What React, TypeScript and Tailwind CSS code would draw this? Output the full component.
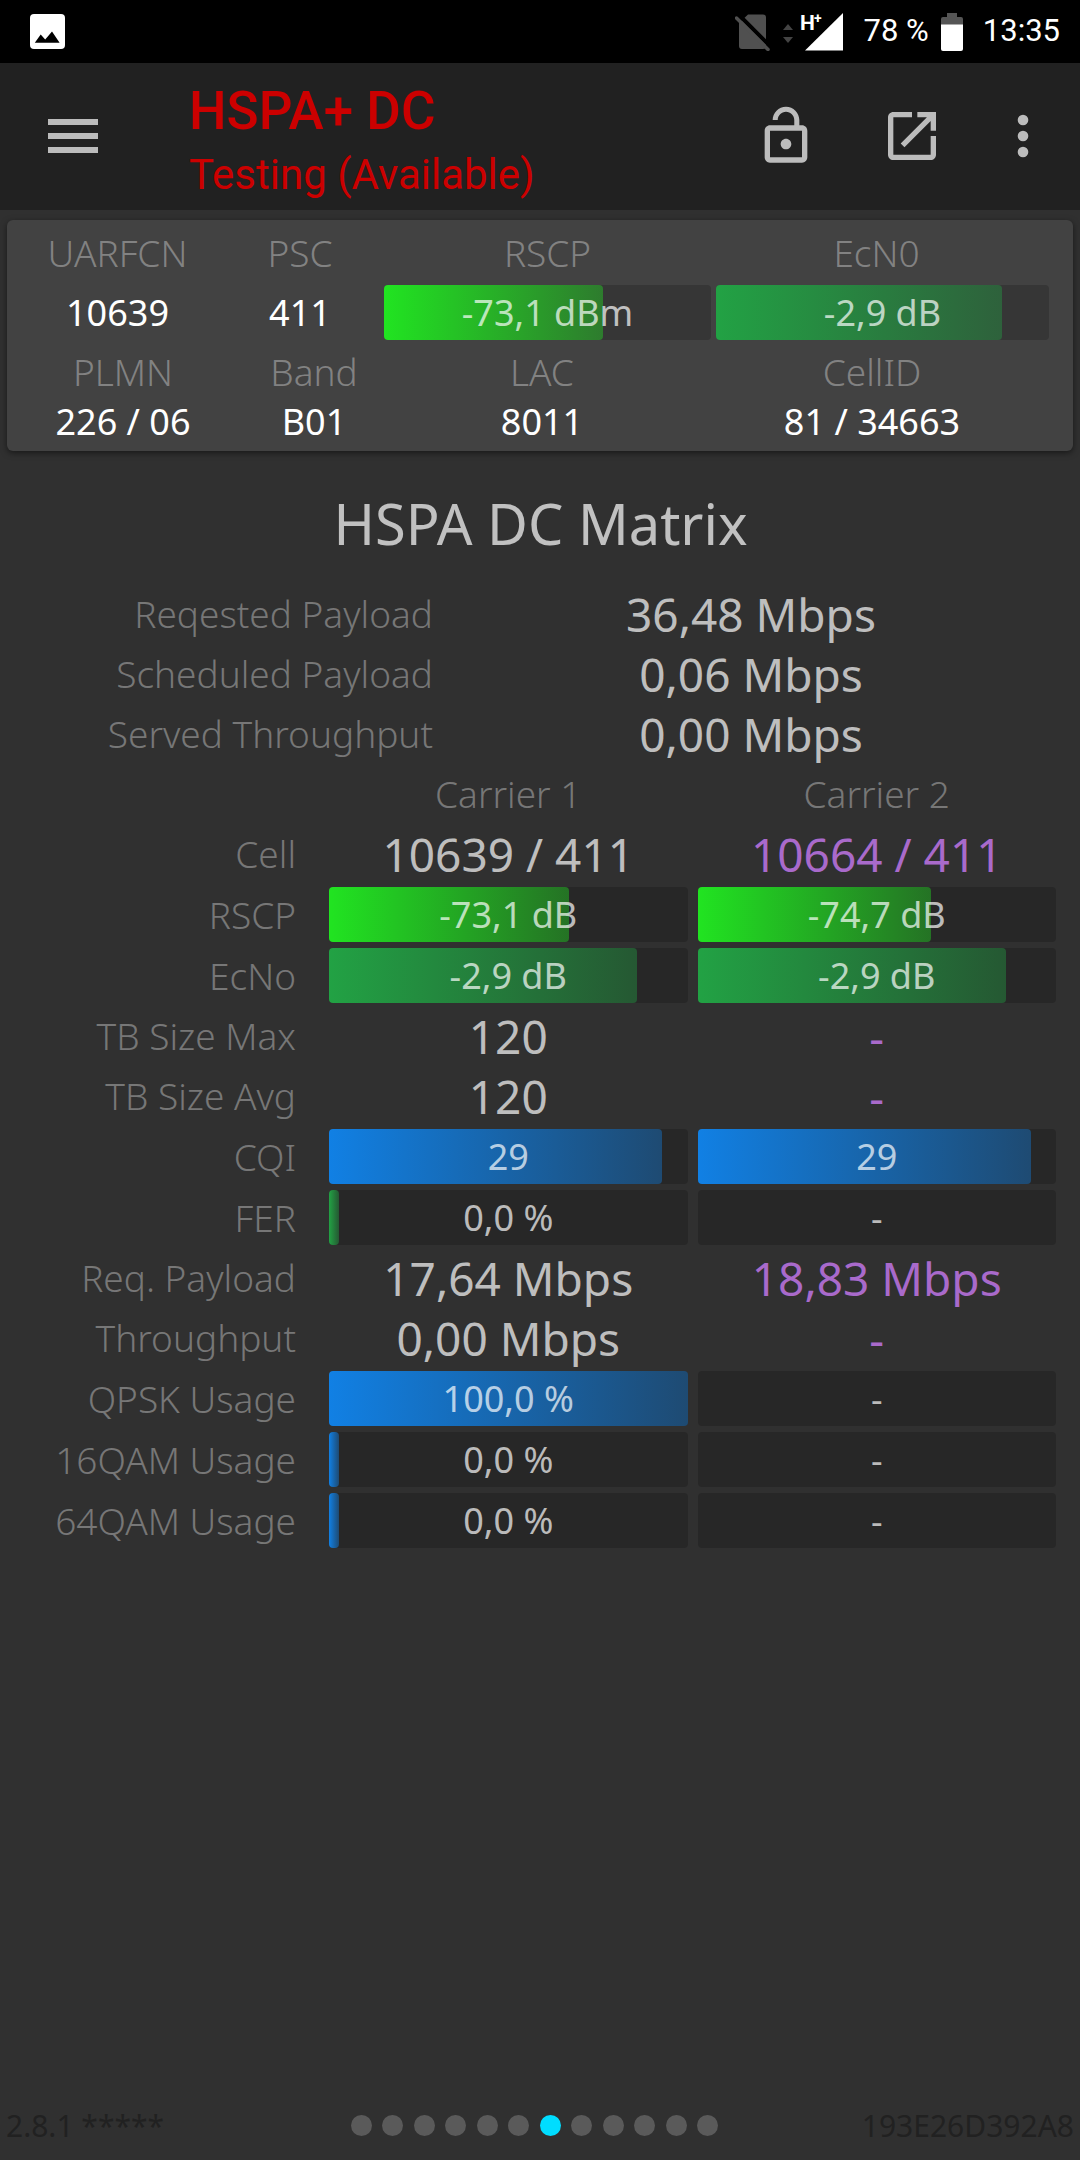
type Tone = "lime" | "green" | "blue";

type Reading = { text: string; level?: number; tone?: Tone };

type Row = { label: string; kind: "text" | "bar"; carriers: [Reading, Reading] };

const tones: Record<Tone, string> = {
  lime: "from-[#21e421] to-[#21e421]/40",
  green: "from-[#22a244] to-[#22a244]/40",
  blue: "from-[#1180e4] to-[#1180e4]/40",
};

const summary = [
  { label: "Reqested Payload", value: "36,48 Mbps" },
  { label: "Scheduled Payload", value: "0,06 Mbps" },
  { label: "Served Throughput", value: "0,00 Mbps" },
];

const rows: Row[] = [
  { label: "Cell", kind: "text", carriers: [{ text: "10639 / 411" }, { text: "10664 / 411" }] },
  {
    label: "RSCP",
    kind: "bar",
    carriers: [
      { text: "-73,1 dB", level: 67, tone: "lime" },
      { text: "-74,7 dB", level: 65, tone: "lime" },
    ],
  },
  {
    label: "EcNo",
    kind: "bar",
    carriers: [
      { text: "-2,9 dB", level: 86, tone: "green" },
      { text: "-2,9 dB", level: 86, tone: "green" },
    ],
  },
  { label: "TB Size Max", kind: "text", carriers: [{ text: "120" }, { text: "-" }] },
  { label: "TB Size Avg", kind: "text", carriers: [{ text: "120" }, { text: "-" }] },
  {
    label: "CQI",
    kind: "bar",
    carriers: [
      { text: "29", level: 93, tone: "blue" },
      { text: "29", level: 93, tone: "blue" },
    ],
  },
  { label: "FER", kind: "bar", carriers: [{ text: "0,0 %", level: 0, tone: "green" }, { text: "-" }] },
  { label: "Req. Payload", kind: "text", carriers: [{ text: "17,64 Mbps" }, { text: "18,83 Mbps" }] },
  { label: "Throughput", kind: "text", carriers: [{ text: "0,00 Mbps" }, { text: "-" }] },
  { label: "QPSK Usage", kind: "bar", carriers: [{ text: "100,0 %", level: 100, tone: "blue" }, { text: "-" }] },
  { label: "16QAM Usage", kind: "bar", carriers: [{ text: "0,0 %", level: 0, tone: "blue" }, { text: "-" }] },
  { label: "64QAM Usage", kind: "bar", carriers: [{ text: "0,0 %", level: 0, tone: "blue" }, { text: "-" }] },
];

const pages = Array.from({ length: 12 }, (_, i) => i);
const currentPage = 6;

function Bar({ text, level, tone = "blue" }: Reading) {
  return (
    <div className="grid h-[55px] w-full rounded bg-black/18">
      {level !== undefined && (
        <div
          className={`col-start-1 row-start-1 min-w-[10px] rounded bg-linear-to-r/srgb ${tones[tone]}`}
          style={{ width: `${level}%` }}
        />
      )}
      <span className="col-start-1 row-start-1 text-center text-[36px] leading-[55px] whitespace-nowrap text-white/70">
        {text}
      </span>
    </div>
  );
}

function StatusBar() {
  return (
    <div className="flex h-[63px] items-center justify-between bg-black pr-5 pl-[30px] font-[Roboto,sans-serif] text-[31px] text-white">
      <svg width="35" height="35" viewBox="0 0 35 35" aria-hidden="true">
        <rect width="35" height="35" rx="4" fill="#fff" />
        <path d="M4.8 28.7 10.7 20.5 15.2 25.5 22 17.5 29.6 28.7Z" fill="#000" />
      </svg>
      <div className="flex items-center">
        <svg width="36" height="38" viewBox="0 0 36 38" aria-hidden="true">
          <path d="M13 1.500H28a3 3 0 0 1 3 3V33a3 3 0 0 1-3 3H7a3 3 0 0 1-3-3V10Z" fill="#505050" />
          <path d="M3 1 36 34" stroke="#000" strokeWidth="4" />
          <path d="M1.500 5 33 36.500" stroke="#505050" strokeWidth="3.500" strokeLinecap="round" />
        </svg>
        <svg className="ml-3" width="10" height="38" viewBox="0 0 10 38" fill="#444" aria-hidden="true">
          <path d="M0 17 5 11 10 17Z" />
          <path d="M0 24 5 30 10 24Z" />
        </svg>
        <svg
          className="ml-2 overflow-visible"
          width="42"
          height="38"
          viewBox="0 0 42 38"
          fill="#fff"
          aria-hidden="true"
        >
          <path d="M42 0V37.500H4Z" />
          <text x="-1" y="17" fontSize="21" fontWeight="700">H</text>
          <text x="13" y="10" fontSize="14" fontWeight="700">+</text>
        </svg>
        <span className="ml-[21px]">78 %</span>
        <svg className="ml-3" width="22" height="38" viewBox="0 0 22 38" aria-hidden="true">
          <path d="M6 0H16V4H20a2 2 0 0 1 2 2V12H0V6a2 2 0 0 1 2-2H6Z" fill="#555" />
          <path d="M0 11.500H22V36a2 2 0 0 1-2 2H2a2 2 0 0 1-2-2Z" fill="#fff" />
        </svg>
        <span className="ml-5">13:35</span>
      </div>
    </div>
  );
}

function Toolbar() {
  return (
    <header className="flex h-[147px] items-center bg-[#212121] pr-[9px] pb-px text-[#bcbcbc]">
      <button aria-label="Menu" className="flex h-full w-[146px] items-center justify-center">
        <svg width="50" height="34" viewBox="0 0 50 34" fill="currentColor" aria-hidden="true">
          <path d="M0 0H50V6H0ZM0 14H50V20H0ZM0 28H50V34H0Z" />
        </svg>
      </button>
      <div className="ml-[43px] flex-1 pt-[14px] font-[Roboto,sans-serif] whitespace-nowrap text-[#cc0000]">
        <h1 className="text-[53px] leading-[64px] font-medium">HSPA+ DC</h1>
        <p className="text-[42px] leading-[64px]">Testing (Available)</p>
      </div>
      <button aria-label="Lock" className="flex h-full w-[126px] items-center justify-center">
        <svg width="64" height="64" viewBox="0 0 24 24" fill="currentColor" aria-hidden="true">
          <path d="M12 17c1.100 0 2-.9 2-2s-.9-2-2-2-2 .9-2 2 .9 2 2 2zm6-9h-1V6c0-2.760-2.240-5-5-5S7 3.240 7 6h1.900c0-1.710 1.390-3.100 3.100-3.100 1.710 0 3.100 1.390 3.100 3.100v2H6c-1.100 0-2 .9-2 2v10c0 1.100.9 2 2 2h12c1.100 0 2-.9 2-2V10c0-1.100-.9-2-2-2zm0 12H6V10h12v10z" />
        </svg>
      </button>
      <button aria-label="Open in new window" className="flex h-full w-[126px] items-center justify-center">
        <svg width="64" height="64" viewBox="0 0 24 24" fill="currentColor" aria-hidden="true">
          <path d="M19 19H5V5h7V3H5c-1.110 0-2 .9-2 2v14c0 1.100.89 2 2 2h14c1.100 0 2-.9 2-2v-7h-2v7zM14 3v2h3.590l-9.830 9.830 1.410 1.410L19 6.410V10h2V3h-7z" />
        </svg>
      </button>
      <button aria-label="More options" className="flex h-full w-24 items-center justify-center">
        <svg width="64" height="64" viewBox="0 0 24 24" fill="currentColor" aria-hidden="true">
          <circle cx="12" cy="6" r="2" />
          <circle cx="12" cy="12" r="2" />
          <circle cx="12" cy="18" r="2" />
        </svg>
      </button>
    </header>
  );
}

function CellCard() {
  return (
    <section className="mx-[7px] mt-[10px] rounded-md bg-[#424242] pt-2 pr-6 pb-1 text-center text-[36px] leading-[50px] whitespace-nowrap text-white shadow-[0_2px_6px_rgba(0,0,0,0.5)]">
      <div className="grid grid-cols-[221fr_146fr_327fr_333fr] items-center gap-x-[5px] gap-y-[7px]">
        <span className="text-[37px] font-light text-white/35">UARFCN</span>
        <span className="pr-3 text-[37px] font-light text-white/35">PSC</span>
        <span className="text-[37px] font-light text-white/35">RSCP</span>
        <span className="pr-3 text-[37px] font-light text-white/35">EcN0</span>
        <span>10639</span>
        <span className="pr-3">411</span>
        <Bar text="-73,1 dBm" level={67} tone="lime" />
        <Bar text="-2,9 dB" level={86} tone="green" />
      </div>
      <div className="mt-[7px] grid grid-cols-[232fr_150fr_306fr_354fr]">
        <span className="text-[37px] font-light text-white/35">PLMN</span>
        <span className="text-[37px] font-light text-white/35">Band</span>
        <span className="text-[37px] font-light text-white/35">LAC</span>
        <span className="text-[37px] font-light text-white/35">CellID</span>
        <span>226 / 06</span>
        <span>B01</span>
        <span>8011</span>
        <span>81 / 34663</span>
      </div>
    </section>
  );
}

function Matrix() {
  return (
    <section className="flex-1 pr-[19px] whitespace-nowrap">
      <h2 className="pt-8 pb-5 pl-5 text-center text-[56px] leading-[81px] text-white/70">HSPA DC Matrix</h2>
      <table className="w-full table-fixed">
        <tbody>
          {summary.map((item) => (
            <tr key={item.label} className="h-[60px]">
              <th className="w-[441px] pr-2 text-right text-[37px] leading-[60px] font-light text-white/35">
                {item.label}
              </th>
              <td className="text-center text-[46px] leading-[60px] text-white/70">{item.value}</td>
            </tr>
          ))}
        </tbody>
      </table>
      <table className="w-full table-fixed">
        <thead>
          <tr className="h-[60px] text-[37px] leading-[60px] text-white/35">
            <td className="w-[324px]" />
            <th className="font-light">Carrier 1</th>
            <th className="font-light">Carrier 2</th>
          </tr>
        </thead>
        <tbody>
          {rows.map((row) => (
            <tr key={row.label}>
              <th className="pr-7 text-right text-[37px] leading-[60px] font-light text-white/35">{row.label}</th>
              {row.carriers.map((reading, i) =>
                row.kind === "bar" ? (
                  <td key={i} className="px-[5px] py-[3px]">
                    <Bar {...reading} />
                  </td>
                ) : (
                  <td
                    key={i}
                    className={`text-center text-[46px] leading-[60px] ${i === 0 ? "text-white/70" : "text-[#a96acb]"}`}
                  >
                    {reading.text}
                  </td>
                )
              )}
            </tr>
          ))}
        </tbody>
      </table>
    </section>
  );
}

export default function App() {
  return (
    <main className="flex min-h-screen flex-col bg-[#303030] font-['Noto_Sans',sans-serif]">
      <StatusBar />
      <Toolbar />
      <CellCard />
      <Matrix />
      <footer className="grid h-[70px] grid-cols-[345fr_367px_356fr] items-center px-1.5 text-[30px] text-[#212121]">
        <span>2.8.1 *****</span>
        <div className="flex justify-between">
          {pages.map((page) => (
            <span
              key={page}
              className={`size-[21px] rounded-full ${page === currentPage ? "bg-[#00ddff]" : "bg-[#5a5a5a]"}`}
            />
          ))}
        </div>
        <span className="text-right">193E26D392A8</span>
      </footer>
    </main>
  );
}
